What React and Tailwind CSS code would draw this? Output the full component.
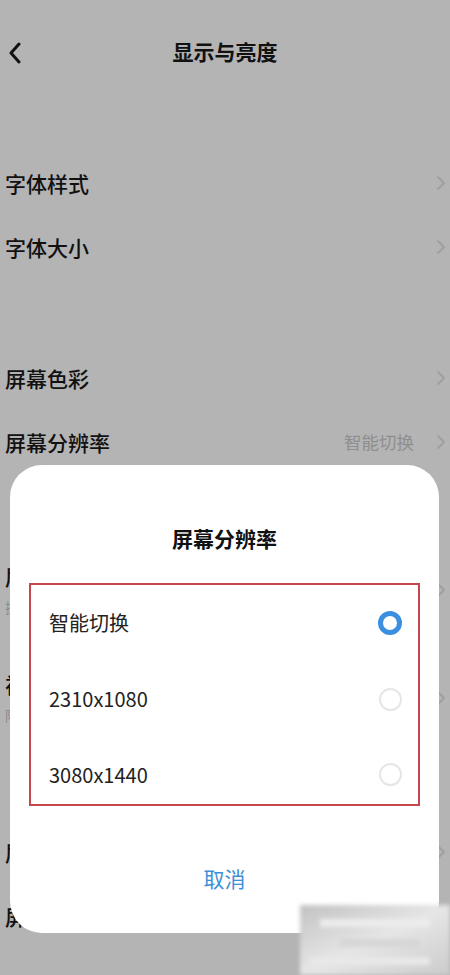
import React from 'react';

const FONT = { fontFamily: '"Noto Sans CJK SC", "Noto Sans", sans-serif' };

const Chevron = ({ className = '' }) => (
  <svg className={className} width="10" height="16" viewBox="0 0 10 16" fill="none">
    <path d="M2 2l6 6-6 6" stroke="currentColor" strokeWidth="2" strokeLinecap="round" strokeLinejoin="round" />
  </svg>
);

const SettingRow = ({ label, value, sub }) => (
  <div className={`flex ${sub ? 'h-[80px]' : 'h-[64px]'} items-center justify-between pl-[5px] pr-[4px]`}>
    <div className="flex flex-col gap-[8px]">
      <span className="text-[21px] font-medium leading-[26px] text-[#111]">{label}</span>
      {sub && <span className="text-[14px] leading-[20px] text-[#8c8c8c]">{sub}</span>}
    </div>
    <div className="flex items-center gap-[22px]">
      {value && <span className="text-[17.5px] text-[#8e8e8e]">{value}</span>}
      <Chevron className="text-[#a0a0a0]" />
    </div>
  </div>
);

const Radio = ({ checked }) =>
  checked ? (
    <span className="block h-[24px] w-[24px] rounded-full border-[5px] border-[#3a8fe0] bg-white" />
  ) : (
    <span className="block h-[23px] w-[23px] rounded-full border-2 border-[#e6e6e6] bg-white" />
  );

const options = [
  { label: '智能切换', checked: true },
  { label: '2310x1080', checked: false },
  { label: '3080x1440', checked: false },
];

export default function App() {
  return (
    <div className="relative h-[975px] w-[450px] overflow-hidden bg-[#b4b4b4]" style={FONT}>
      {/* page header */}
      <div className="relative flex h-[104px] items-center justify-center">
        <svg className="absolute left-[8px] top-[42px]" width="14" height="22" viewBox="0 0 14 22" fill="none">
          <path d="M11 2L3 11l8 9" stroke="#111" strokeWidth="3" strokeLinecap="round" strokeLinejoin="round" />
        </svg>
        <span className="text-[21px] font-bold text-[#111]">显示与亮度</span>
      </div>

      <div className="mt-[47px]">
        <SettingRow label="字体样式" />
        <SettingRow label="字体大小" />
      </div>

      <div className="mt-[67px]">
        <SettingRow label="屏幕色彩" />
        <SettingRow label="屏幕分辨率" value="智能切换" />
      </div>

      <div className="mt-[76px]">
        <SettingRow label="屏幕刷新率" sub="提高刷新率可带来更流畅的体验" />
      </div>
      <div className="mt-[28px]">
        <SettingRow label="视觉舒适度" sub="降低屏幕闪烁" />
      </div>
      <div className="mt-[82px]">
        <SettingRow label="屏幕显示范围" />
        <SettingRow label="屏幕显示" />
      </div>

      {/* resolution picker sheet */}
      <div className="absolute left-[10px] top-[465px] flex h-[468px] w-[429px] flex-col items-center rounded-[32px] bg-white pt-[61px]">
        <span className="text-[21px] font-bold leading-[24px] text-[#111]">屏幕分辨率</span>
        <div className="mt-[33px] w-[391px] border-2 border-[#c4474d]">
          {options.map((o, i) => (
            <div
              key={o.label}
              className={
                i === options.length - 1
                  ? 'flex h-[67px] items-start justify-between pl-[18px] pr-[16px] pt-[26px]'
                  : 'flex h-[76px] items-center justify-between pl-[18px] pr-[16px]'
              }
            >
              <span className="text-[20px] leading-[24px] text-[#222]">{o.label}</span>
              <Radio checked={o.checked} />
            </div>
          ))}
        </div>
        <span className="mt-[60px] text-[21px] leading-[24px] text-[#3d8fd6]">取消</span>
      </div>

      {/* mosaic mark in the corner */}
      <div className="absolute left-[300px] top-[905px] h-[70px] w-[150px] bg-gradient-to-br from-[#c2c2c2] via-[#e6e6e6] to-[#cbcbcb] blur-[2px]">
        <div className="ml-[20px] mt-[14px] h-[8px] w-[110px] bg-[#ececec]" />
        <div className="ml-[40px] mt-[12px] h-[8px] w-[80px] bg-[#d6d6d6]" />
        <div className="ml-[10px] mt-[10px] h-[8px] w-[120px] bg-[#e8e8e8]" />
      </div>
    </div>
  );
}
